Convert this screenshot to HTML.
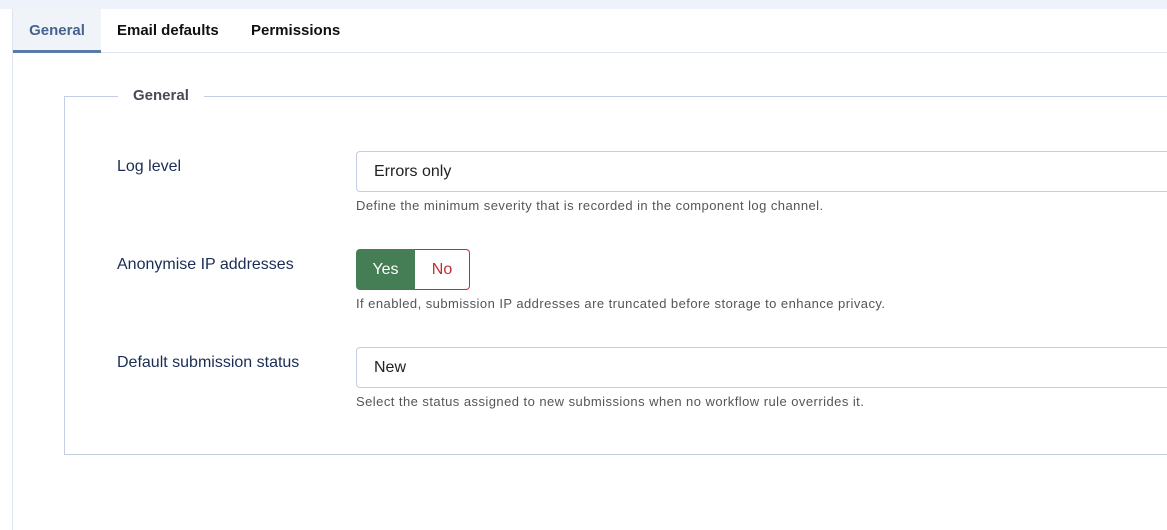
<!DOCTYPE html>
<html><head><style>
body{margin:0;width:1167px;height:530px;overflow:hidden;background:#fff;font-family:"Liberation Sans",Roboto,sans-serif;position:relative}
.top{position:absolute;left:0;top:0;width:1167px;height:9px;background:#eef3fb}
.lb{position:absolute;left:12px;top:9px;width:1px;height:521px;background:#dde4ee}
.tabline{position:absolute;left:13px;top:52px;width:1154px;height:1px;background:#dde4ee}
.tab{position:absolute;top:9px;height:43px;line-height:43px;font-size:15px;font-weight:bold;color:#111}
.t1{left:13px;width:88px;text-align:center;background:#f0f4f9;color:#46638f;border-bottom:3px solid #5a7aa8;height:41px;line-height:43px}
.fs{position:absolute;left:64px;top:96px;width:1110px;height:357px;border:1px solid #c2cfe2}
.leg{position:absolute;left:118px;top:86px;padding:0 15px;background:#fff;font-size:15px;font-weight:bold;color:#474c55;line-height:20px}
.lab{position:absolute;left:117px;font-size:16px;color:#1a2d54}
.inp{position:absolute;left:356px;width:820px;height:39px;border:1px solid #c2cfe2;border-radius:4px;font-size:16px;line-height:39px;padding-left:17px;box-sizing:content-box;color:#222}
.help{position:absolute;left:356px;font-size:13px;color:#555;letter-spacing:0.45px}
.yes{position:absolute;left:356px;top:249px;width:59px;height:41px;background:#457d54;color:#fff;border-radius:4px 0 0 4px;text-align:center;line-height:41px;font-size:16px}
.no{position:absolute;left:415px;top:249px;width:54px;height:39px;border:1px solid #c52d2d;border-left:none;border-radius:0 4px 4px 0;color:#c52d2d;text-align:center;line-height:39px;font-size:16px}
</style></head><body>
<div class="top"></div><div class="lb"></div><div class="tabline"></div>
<div class="tab t1">General</div>
<div class="tab" style="left:117px">Email defaults</div>
<div class="tab" style="left:251px">Permissions</div>
<div class="fs"></div><div class="leg">General</div>
<div class="lab" style="top:158px">Log level</div>
<div class="inp" style="top:151px">Errors only</div>
<div class="help" style="top:198px">Define the minimum severity that is recorded in the component log channel.</div>
<div class="lab" style="top:256px">Anonymise IP addresses</div>
<div class="yes">Yes</div><div class="no">No</div>
<div class="help" style="top:296px">If enabled, submission IP addresses are truncated before storage to enhance privacy.</div>
<div class="lab" style="top:354px">Default submission status</div>
<div class="inp" style="top:347px">New</div>
<div class="help" style="top:394px">Select the status assigned to new submissions when no workflow rule overrides it.</div>
</body></html>
